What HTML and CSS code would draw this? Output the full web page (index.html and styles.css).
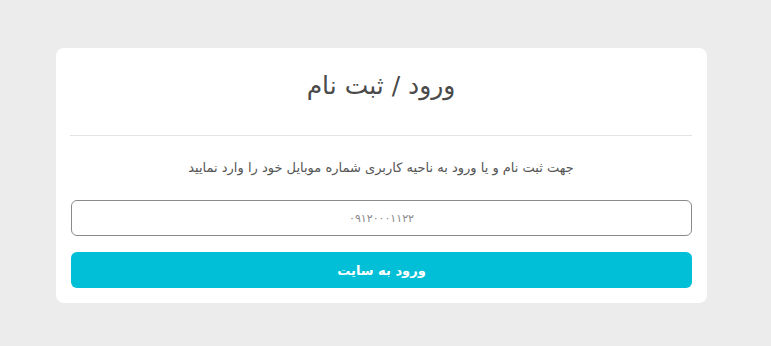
FILE: index.html
```html
<!DOCTYPE html>
<html lang="fa" dir="rtl">

<head>
  <meta charset="utf-8">
  <link rel="stylesheet" href="styles.css">
</head>

<body>
  <div class="login-wrap">
    <div class="login-card">
      <div class="login-head">
        <h1 class="login-title">ورود / ثبت نام</h1>
      </div>

      <p class="login-hint">جهت ثبت نام و یا ورود به ناحیه کاربری شماره موبایل خود را وارد نمایید</p>

      <input type="text" class="phone-input" placeholder="۰۹۱۲۰۰۰۱۱۲۲">

      <button type="button" class="login-btn">ورود به سایت</button>
    </div>
  </div>
</body>

</html>
```

FILE: styles.css
```css
body {
  margin: 0;
  background-color: #ececec;
  font-family: "DejaVu Sans", "Noto Sans", sans-serif;
  color: #444;
}

.login-wrap {
  padding: 48px 64px 0 0;
  display: flex;
  justify-content: flex-start;
}

.login-card {
  width: 651px;
  box-sizing: border-box;
  background: #fff;
  border-radius: 8px;
  padding: 0 15px 15px 14px;
  display: flex;
  flex-direction: column;
}

.login-head {
  height: 88px;
  padding-bottom: 12px;
  box-sizing: border-box;
  border-bottom: 1px solid #e3e3e3;
  display: flex;
  align-items: center;
  justify-content: center;
}

.login-title {
  margin: 0;
  font-size: 25px;
  font-weight: normal;
  color: #4a4a4a;
}

.login-hint {
  margin: 0;
  height: 64px;
  line-height: 64px;
  text-align: center;
  font-size: 13px;
  color: #555;
}

.phone-input {
  height: 36px;
  box-sizing: border-box;
  margin-left: 1px;
  border: 1px solid #8a8a8a;
  border-radius: 6px;
  text-align: center;
  font-family: inherit;
  font-size: 11px;
  outline: none;
}

.phone-input::placeholder {
  color: #888;
}

.login-btn {
  margin-top: 16px;
  height: 36px;
  margin-left: 1px;
  border: none;
  border-radius: 6px;
  background: #00bfd6;
  color: #fff;
  font-family: inherit;
  font-size: 13px;
  font-weight: bold;
}
```
